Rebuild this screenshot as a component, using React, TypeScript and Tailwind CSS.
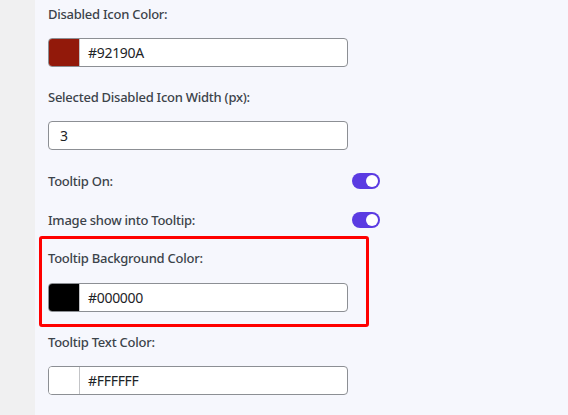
const font = { fontFamily: '"Noto Sans", "Open Sans", sans-serif' }

const ColorInput = ({ color, value }: { color: string; value: string }) => {
  return (
    <div className="flex h-[29px] w-[300px] overflow-hidden rounded-[4px] border border-[#8c8f94] bg-white">
      <div className="h-full w-[31px] border-r border-[#c3c4c7]" style={{ backgroundColor: color }} />
      <div className="flex items-center pl-[8px] text-[14px] tracking-[-0.3px] text-[#1d2327]">{value}</div>
    </div>
  )
}

const Toggle = () => {
  return (
    <div className="flex h-[16px] w-[28px] items-center justify-end rounded-full bg-[#5b3be2] pr-[2px]">
      <div className="h-[12px] w-[12px] rounded-full bg-white" />
    </div>
  )
}

const Label = ({ children }: { children: React.ReactNode }) => {
  return (
    <div className="h-[20px] text-[13px] leading-[20px] font-medium tracking-[-0.25px] text-[#3c434a]">
      {children}
    </div>
  )
}

export default function App() {
  return (
    <div className="flex h-[415px] w-[568px] overflow-hidden bg-[#f6f7fd]" style={font}>
      <div className="h-full w-[35px] shrink-0 bg-[#f0f0f1]" />
      <div className="flex flex-col pl-[13px] pt-[4px]">
        <Label>Disabled Icon Color:</Label>
        <div className="mt-[14px]">
          <ColorInput color="#92190A" value="#92190A" />
        </div>

        <div className="mt-[20px]">
          <Label>Selected Disabled Icon Width (px):</Label>
        </div>
        <div className="mt-[14px] flex h-[29px] w-[300px] items-center rounded-[4px] border border-[#8c8f94] bg-white pl-[11px] text-[14px] text-[#1d2327]">
          3
        </div>

        <div className="mt-[21px] flex h-[20px] w-[332px] items-center justify-between">
          <Label>Tooltip On:</Label>
          <Toggle />
        </div>
        <div className="mt-[19px] flex h-[20px] w-[332px] items-center justify-between">
          <Label>Image show into Tooltip:</Label>
          <Toggle />
        </div>

        <div className="-ml-[9px] mt-[6px] w-[330px] rounded-[3px] border-[3px] border-[#ff0000] pb-[12px] pl-[6px] pt-[9px]">
          <Label>Tooltip Background Color:</Label>
          <div className="mt-[15px]">
            <ColorInput color="#000000" value="#000000" />
          </div>
        </div>

        <div className="mt-[5px]">
          <Label>Tooltip Text Color:</Label>
        </div>
        <div className="mt-[14px]">
          <ColorInput color="#ffffff" value="#FFFFFF" />
        </div>
      </div>
    </div>
  )
}
